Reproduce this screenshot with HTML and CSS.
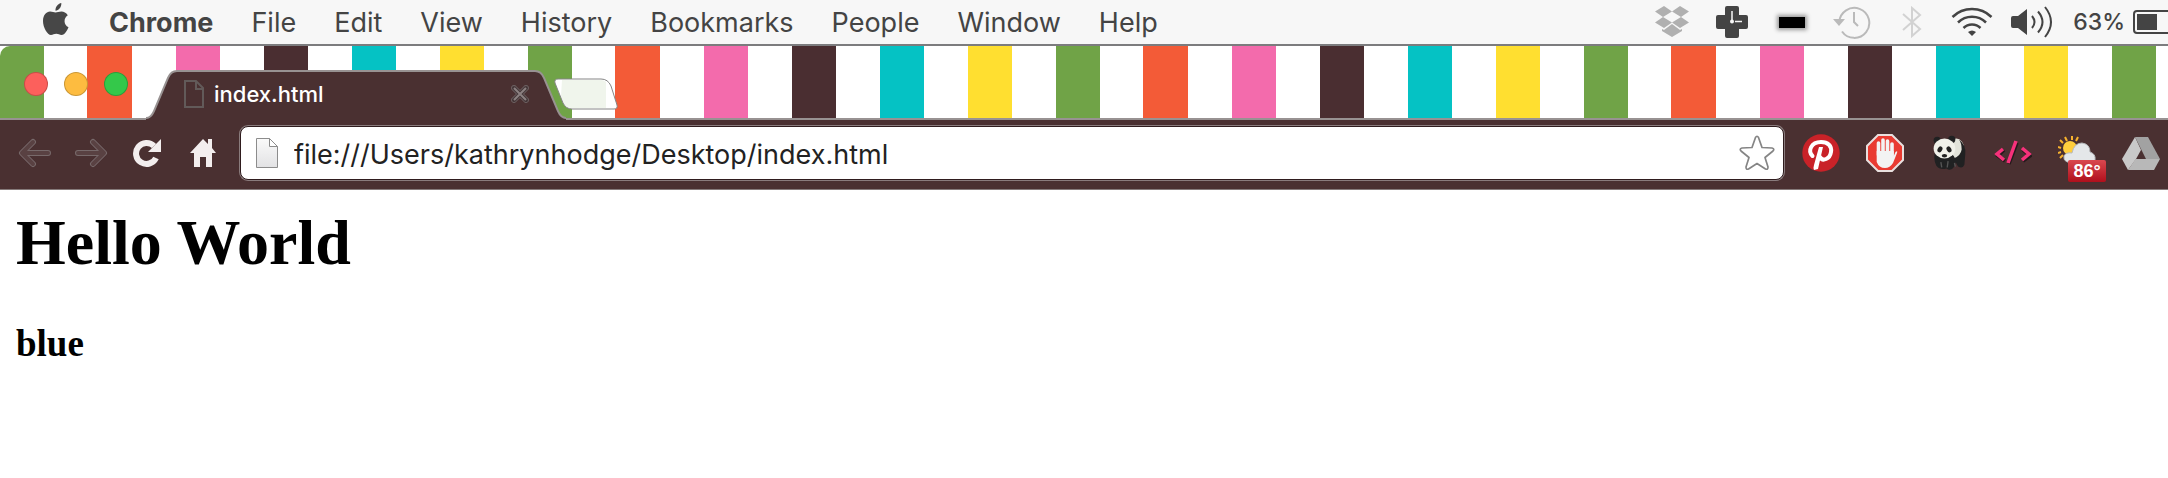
FILE: index.html
```html
<!DOCTYPE html>
<html lang="en">
<head>
<meta charset="utf-8">
<title>index.html</title>
<link rel="stylesheet" href="styles.css">
</head>
<body>
<header class="menubar">
  <nav class="menus" aria-label="Application menu">
    <button class="menu apple" aria-label="Apple menu"><svg width="28" height="34" viewBox="0 0 28 34"><path fill="#474747" d="M13.500 9.600C12 9.600 10.500 8.600 8 8.600C4.500 8.600 1 12 1 18C1 24.500 5.500 32 9 32C11 32 12 30.800 14.300 30.800C16.500 30.800 17.500 32 19.500 32C23 32 25.500 26.800 26.500 24.200C21.500 22 21.300 14.800 25.800 12.200C24.200 9.800 21.800 8.600 19.500 8.600C17 8.600 15.200 9.600 13.500 9.600ZM13.500 7.800C13.200 4 16 .6 19.300 0C19.700 4 16.800 7.500 13.500 7.800Z"/></svg></button>
    <button class="menu app">Chrome</button>
    <button class="menu">File</button>
    <button class="menu">Edit</button>
    <button class="menu">View</button>
    <button class="menu">History</button>
    <button class="menu">Bookmarks</button>
    <button class="menu">People</button>
    <button class="menu">Window</button>
    <button class="menu">Help</button>
  </nav>
  <div class="status">
    <span class="cell"><svg width="36" height="32" viewBox="0 0 36 32" fill="#b0b0b0"><path d="M10 0L18 5.500L9 11L1 5.500ZM26 0L35 5.500L27 11L18 5.500ZM9 11L18 16.500L10 22L1 16.500ZM27 11L35 16.500L26 22L18 16.500ZM18 18L26 24L28 23V25L18 31L8 25V23L10 24Z"/></svg></span>
    <span class="cell"><svg width="32" height="32" viewBox="0 0 32 32"><path fill="#444" d="M11 0H21Q23 0 23 2V9H30Q32 9 32 11V21Q32 23 30 23H23V30Q23 32 21 32H11Q9 32 9 30V23H2Q0 23 0 21V11Q0 9 2 9H9V2Q9 0 11 0Z"/><path d="M16 5V15M19 15.500H26" stroke="#f7f7f7" stroke-width="1.500"/><circle cx="16" cy="15.500" r="2" fill="#f7f7f7"/></svg></span>
    <span class="cell"><span class="dash"></span></span>
    <span class="cell"><svg width="38" height="34" viewBox="0 0 38 34" fill="none" stroke="#bababa" stroke-width="2"><path d="M6.300 17A15 15 0 1 1 9 26.500M21 7V17L25 21"/><path fill="#bababa" stroke="none" d="M0 14H12L6 21Z"/></svg></span>
    <span class="cell"><svg width="20" height="32" viewBox="0 0 20 32" fill="none" stroke="#d2d2d2" stroke-width="2"><path d="M1 8L18 23L10 30V2L18 9L1 24"/></svg></span>
    <span class="cell"><svg width="42" height="30" viewBox="0 0 42 30" fill="none" stroke="#444" stroke-width="2.500"><path d="M1.500 10A28 28 0 0 1 40.500 10M7 15.500A20 20 0 0 1 35 15.500M12.500 21A12 12 0 0 1 29.500 21"/><path fill="#444" stroke="none" d="M21 29L17 25Q21 22 25 25Z"/></svg></span>
    <span class="cell"><svg width="42" height="32" viewBox="0 0 42 32"><path fill="#444" d="M2 10H7L16 3V29L7 22H2Q0 22 0 20V12Q0 10 2 10Z"/><path fill="none" stroke="#444" stroke-width="2" d="M21 10Q26 16 21 22M27 5.500Q36 16 27 26.500M34 1Q46 16 34 31"/></svg></span>
    <span class="percent">63%</span>
    <svg class="battery" width="35" height="24" viewBox="0 0 35 24"><path fill="none" stroke="#444" stroke-width="2" d="M36 1H4Q1 1 1 4V20Q1 23 4 23H36"/><path fill="#444" d="M4 4H24V20H4Z"/></svg>
  </div>
</header>

<div class="tabstrip">
  <div class="lights">
    <button class="light red" aria-label="Close window"></button>
    <button class="light amber" aria-label="Minimize window"></button>
    <button class="light green" aria-label="Zoom window"></button>
  </div>
  <div class="tab">
    <svg class="tab-shape" viewBox="0 0 420 51" preserveAspectRatio="none"><path fill="#4a3031" d="M0 51V49.500Q5 49 8 42L22 8Q25 1 31 1H389Q395 1 398 8L412 42Q415 49 420 49.500V51Z"/><path fill="none" stroke="#989292" stroke-width="2" d="M0 49Q5 49 8 42L22 8Q25 1 31 1H389Q395 1 398 8L412 42Q415 49 420 49"/></svg>
    <svg class="tab-icon" width="20" height="28" viewBox="0 0 20 28" fill="none" stroke="#625a59" stroke-width="2"><path d="M1 1H12L19 8V27H1ZM12 1V9H19"/></svg>
    <span class="tab-title">index.html</span>
    <button class="tab-close" aria-label="Close tab"><svg width="18" height="18" viewBox="0 0 18 18"><path d="M3 3L15 15M15 3L3 15" stroke="#695c5d" stroke-width="6" stroke-linecap="round"/><path d="M3 3L15 15M15 3L3 15" stroke="#443638" stroke-width="4" stroke-linecap="round"/><path d="M3 3L15 15M15 3L3 15" stroke="#8b8081" stroke-width="2"/></svg></button>
  </div>
  <button class="new-tab" aria-label="New tab"><svg width="64" height="32" viewBox="0 0 64 32"><path fill="#fff" d="M4 1H47Q54 1 57 8L63 27Q64 31 60 31H18Q12 31 9 25L1 5Q0 1 4 1Z"/><path fill="#f0f5ec" d="M8 2H47Q50 2 52 4V30H18Q12 30 9 24L7 18Z"/><path fill="none" stroke="#858585" d="M4 1H47Q54 1 57 8L63 27Q64 31 60 31H18Q12 31 9 25L1 5Q0 1 4 1Z"/></svg></button>
</div>

<div class="toolbar">
  <div class="nav-buttons">
    <button aria-label="Back"><svg width="34" height="30" viewBox="0 0 34 30" fill="none" stroke-linecap="round" stroke-linejoin="round"><path stroke="#77696a" stroke-width="6" d="M15 4L4 15L15 26M5 15H30"/><path stroke="#594142" stroke-width="4" d="M15 4L4 15L15 26M5 15H30"/></svg></button>
    <button aria-label="Forward"><svg width="34" height="30" viewBox="0 0 34 30" fill="none" stroke-linecap="round" stroke-linejoin="round"><path stroke="#77696a" stroke-width="6" d="M19 4L30 15L19 26M29 15H4"/><path stroke="#594142" stroke-width="4" d="M19 4L30 15L19 26M29 15H4"/></svg></button>
    <button aria-label="Reload"><svg width="30" height="30" viewBox="0 0 30 30"><path fill="none" stroke="#f3eeee" stroke-width="6" d="M22 8A10.500 10.500 0 1 0 24 20"/><path fill="#f3eeee" d="M29 1V14H16Z"/></svg></button>
    <button aria-label="Home"><svg width="26" height="28" viewBox="0 0 26 28"><path fill="#f3eeee" d="M13 0L18 5V0H22V9L26 14H22V28H16V18H10V28H4V14H0Z"/></svg></button>
  </div>
  <form class="address">
    <svg width="22" height="30" viewBox="0 0 22 30"><defs><linearGradient id="paper" x2="0" y2="1"><stop stop-color="#fafafa"/><stop offset="1" stop-color="#e2e2e4"/></linearGradient></defs><path fill="url(#paper)" stroke="#8c8c8c" d="M.5 .5H13.500L21.500 8.500V29.500H.5Z"/><path fill="#fff" stroke="#8c8c8c" d="M13.500 .5V8.500H21.500Z"/></svg>
    <input type="text" aria-label="Address" value="file:///Users/kathrynhodge/Desktop/index.html" spellcheck="false">
    <button type="button" aria-label="Bookmark this page"><svg width="36" height="36" viewBox="0 0 36 36"><path fill="#fff" stroke="#858585" stroke-width="1.700" stroke-linejoin="round" d="M16.500 2.500Q18 0 19.500 2.500L23 12.500L33 13Q36 14 34 16L26 22.500L29 32Q29 35 26.500 34L18 28.500L9.500 34Q7 35 7 32L10 22.500L2 16Q0 14 3 13L13 12.500Z"/></svg></button>
  </form>
  <div class="extensions">
    <button aria-label="Pinterest"><svg width="38" height="38" viewBox="0 0 38 38"><circle cx="19" cy="19" r="18.700" fill="#c92228"/><path fill="none" stroke="#fff" stroke-width="4" stroke-linecap="round" d="M10.500 22C5.500 17 9 8 19 8C26 8 30 12 29 18C28 25 20.500 28 18 23"/><path fill="#fff" d="M17 13H21L16 35L12 36Q11 34 12 31Z"/></svg></button>
    <button aria-label="AdBlock"><svg width="38" height="38" viewBox="0 0 38 38"><path fill="#e93b32" stroke="#e9e0df" stroke-width="2" d="M12 1H26L37 12V26L26 37H12L1 26V12Z"/><path fill="none" stroke="#f3f3f3" stroke-width="3.600" stroke-linecap="round" d="M12.500 21V9M17 20V6M21.500 20V7M26 21V10"/><path fill="#f3f3f3" d="M10.700 17H27.800V22L29.500 18Q32 16 31 19L27 29Q24 34 19 34Q13 34 10.700 28Z"/></svg></button>
    <button aria-label="Panda"><svg width="38" height="38" viewBox="-3 -1 42 40"><ellipse cx="26" cy="15" rx="9" ry="12" fill="#e2e3da"/><path fill="#202122" d="M29 4Q37 10 36 20L35 32Q33 37 28 34L23 25Q31 22 32 15Q32 8 29 4ZM3 17L21 20Q28 25 24 34Q20 40 15 36Q8 38 4 33Q0 25 3 17Z"/><circle cx="5" cy="5" r="4" fill="#202122"/><circle cx="21" cy="4" r="4" fill="#202122"/><ellipse cx="13" cy="14" rx="12" ry="11" fill="#f1f1ea"/><g fill="#222"><ellipse cx="8" cy="15" rx="2.500" ry="3.500" transform="rotate(30 8 15)"/><ellipse cx="18" cy="15" rx="2.500" ry="3.500" transform="rotate(-30 18 15)"/><ellipse cx="13" cy="22" rx="3" ry="2"/></g><path stroke="#555" stroke-width="1.500" fill="none" d="M9 29L10 35M17 28L16 35M24 30L25 34"/></svg></button>
    <button aria-label="Developer tools"><svg width="38" height="38" viewBox="0 0 38 38" fill="none"><path d="M9 15L3 21L10 26M22 8L14 29M28 15L35 21L28 26" stroke="#25191c" stroke-width="3.500" transform="translate(1 1)"/><path d="M9 15L3 20L10 26M22 7L14 29M28 14L35 20L28 26" stroke="#f7317b" stroke-width="3.500"/></svg></button>
    <button class="weather" aria-label="Weather, 86 degrees"><svg width="38" height="38" viewBox="0 0 38 38"><path d="M9 7L7 3M14 6V2M18 7L20 3M5 9L2 6M3 14L0 13M3 18L0 19M5 21L2 24" stroke="#f8b22e" stroke-width="2"/><circle cx="12" cy="14" r="7" fill="#ffce3d"/><path fill="#e4e7e9" stroke="#b7babd" d="M9 28Q5 26 6 22Q8 18 14 19Q16 9 24 9Q32 10 32 18Q38 20 37 26L35 28Z"/></svg><span class="badge">86°</span></button>
    <button aria-label="Drive"><svg width="38" height="38" viewBox="0 0 38 38"><path fill="#c9c9c9" d="M13 3L0 25L6 36L14 25L19 16Z"/><path fill="#a2a2a2" d="M13 3H26L38 25H24Z"/><path fill="#b8b8b8" d="M13.500 25H38L32 36H6Z"/></svg></button>
  </div>
</div>

<main class="page">
  <h1>Hello World</h1>
  <h3>blue</h3>
</main>
</body>
</html>
```
FILE: styles.css
```css
* { box-sizing: border-box; }

body {
  margin: 0;
  background: #fff;
  overflow-x: hidden;
  font-family: Inter, Roboto, sans-serif;
}

button {
  margin: 0;
  padding: 0;
  border: 0;
  background: none;
  color: inherit;
  font: inherit;
}

svg { display: block; flex: none; }

.menubar {
  display: flex;
  justify-content: space-between;
  height: 46px;
  padding-left: 42px;
  background: #f7f7f7;
  border-bottom: 2px solid #7c7c7e;
  color: #444;
  font-size: 27px;
}

.menus, .status { display: flex; align-items: center; }
.menus { gap: 38px; }
.menu { padding-top: 2px; white-space: nowrap; line-height: 42px; }
.apple { padding: 0 1px 4px 0; }
.app { font-weight: 700; }

.status { gap: 18px; }
.cell { display: flex; justify-content: center; width: 42px; }

.dash {
  width: 26px;
  height: 11px;
  background: #000;
  box-shadow: 0 0 4px 2px #999;
}

.percent { margin-left: 2px; font-size: 23px; font-weight: 500; }
.battery { margin-left: -10px; }

.tabstrip {
  display: flex;
  align-items: flex-end;
  height: 74px;
  border-bottom: 2px solid #989292;
  border-top-left-radius: 10px;
  background: repeating-linear-gradient(90deg,
    #70a347 0 44px, #fff 44px 87px,
    #f35b37 87px 132px, #fff 132px 176px,
    #f36bac 176px 220px, #fff 220px 264px,
    #4a2e31 264px 308px, #fff 308px 352px,
    #05c2c4 352px 396px, #fff 396px 440px,
    #ffdf30 440px 484px, #fff 484px 528px);
}

.lights { display: flex; gap: 16px; padding: 0 18px 22px 24px; }

.light {
  width: 24px;
  height: 24px;
  border: 1px solid #0003;
  border-radius: 50%;
}

.red { background: #fc605c; }
.amber { background: #fdbc40; }
.green { background: #34c84a; }

.tab {
  position: relative;
  display: flex;
  align-items: center;
  width: 420px;
  height: 50px;
  margin-bottom: -2px;
  padding: 0 37px 2px 38px;
  color: #fff;
}

.tab-shape { position: absolute; inset: 0; width: 100%; height: 100%; }
.tab-icon, .tab-title, .tab-close { position: relative; }
.tab-title { flex: 1; margin-left: 10px; font-size: 22px; font-weight: 500; }
.new-tab { margin: 0 0 8px -12px; }

.toolbar {
  display: flex;
  align-items: center;
  gap: 18px;
  height: 70px;
  padding: 0 8px 3px 18px;
  background: #4a3031;
  border-bottom: 1px solid #857a7a;
}

.nav-buttons { display: flex; align-items: center; gap: 22px; }
.nav-buttons button { display: flex; justify-content: center; width: 34px; }

.address {
  display: flex;
  flex: 1;
  align-items: center;
  gap: 16px;
  height: 54px;
  margin-left: 2px;
  padding: 0 8px 0 15px;
  background: #fff;
  border: 1px solid #2f1c1e;
  border-radius: 8px;
  box-shadow: 0 0 0 1px #8a7c7d;
}

.address input {
  flex: 1;
  min-width: 0;
  padding: 2px 0 0;
  border: 0;
  outline: 0;
  background: none;
  color: #222;
  font: 27px Inter, Roboto, sans-serif;
}

.extensions { display: flex; gap: 26px; }
.weather { position: relative; }

.badge {
  position: absolute;
  left: 10px;
  top: 26px;
  width: 38px;
  border-radius: 2px;
  background: linear-gradient(#d9484f, #b0101c);
  color: #fff;
  font: 700 18px/22px "Liberation Sans", sans-serif;
  text-align: center;
}

.page {
  padding: 17px 16px;
  color: #000;
  font-family: "Liberation Serif", serif;
}

.page h1 { margin: 0 0 44px; font-size: 64px; line-height: 72px; }
.page h3 { margin: 0; font-size: 37px; line-height: 42px; }
```
